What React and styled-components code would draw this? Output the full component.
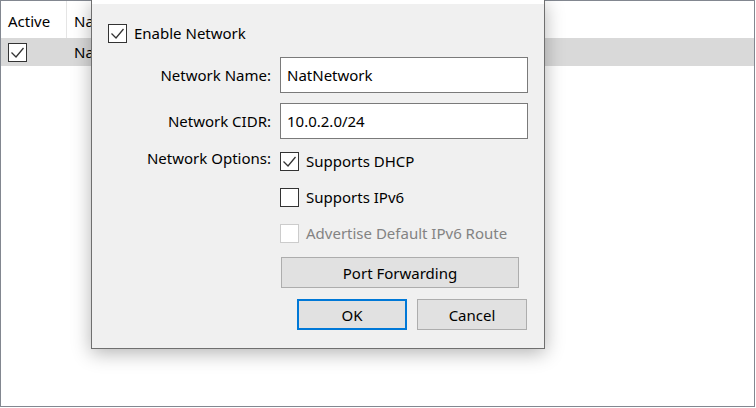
import React from "react";
import styled, { createGlobalStyle } from "styled-components";

const GlobalStyle = createGlobalStyle`
  body {
    margin: 0;
    background: #ffffff;
    font-family: "Noto Sans", "Open Sans", sans-serif;
    font-size: 15px;
    color: #000;
  }
`;

const CheckMark = () => (
  <svg width="17" height="17" viewBox="0 0 17 17">
    <polyline
      points="2.5,8.5 7,13 14.5,4"
      fill="none"
      stroke="#333"
      strokeWidth="1.3"
    />
  </svg>
);

const App = () => {
  return (
    <Screen>
      <GlobalStyle />
      <Frame>
        <HeaderRow>
          <HeaderCell $width={66}>Active</HeaderCell>
          <HeaderCell>Name</HeaderCell>
        </HeaderRow>
        <TableRow>
          <ActiveCell>
            <Box>
              <CheckMark />
            </Box>
          </ActiveCell>
          <NameCell>NatNetwork</NameCell>
        </TableRow>
      </Frame>

      <Dialog>
        <TitleStrip />
        <Content>
          <CheckLine>
            <Box>
              <CheckMark />
            </Box>
            Enable Network
          </CheckLine>

          <FormRow $top={14}>
            <Label>Network Name:</Label>
            <Input>NatNetwork</Input>
          </FormRow>

          <FormRow $top={10}>
            <Label>Network CIDR:</Label>
            <Input>10.0.2.0/24</Input>
          </FormRow>

          <FormRow $top={13} $start>
            <Label $up>Network Options:</Label>
            <CheckLine>
              <Box>
                <CheckMark />
              </Box>
              Supports DHCP
            </CheckLine>
          </FormRow>

          <FormRow $top={17}>
            <span />
            <CheckLine>
              <Box />
              Supports IPv6
            </CheckLine>
          </FormRow>

          <FormRow $top={17}>
            <span />
            <CheckLine $disabled>
              <Box $disabled />
              Advertise Default IPv6 Route
            </CheckLine>
          </FormRow>

          <FormRow $top={14}>
            <span />
            <WideButton>Port Forwarding</WideButton>
          </FormRow>

          <ButtonBar>
            <Button $default>OK</Button>
            <Button>Cancel</Button>
          </ButtonBar>
        </Content>
      </Dialog>
    </Screen>
  );
};
export default App;

const Screen = styled.div`
  position: relative;
  width: 756px;
  height: 408px;
  overflow: hidden;
`;

const Frame = styled.div`
  width: 753px;
  height: 405px;
  border: 1px solid #828790;
  background: #fff;
`;

const HeaderRow = styled.div`
  display: flex;
  height: 37px;
`;

const HeaderCell = styled.div`
  display: flex;
  align-items: center;
  padding: 3px 0 0 7px;
  box-sizing: border-box;
  width: ${(p) => (p.$width ? `${p.$width}px` : "auto")};
  border-right: ${(p) => (p.$width ? "1px solid #e5e5e5" : "none")};
`;

const TableRow = styled.div`
  display: flex;
  align-items: center;
  height: 28px;
  background: #d9d9d9;
`;

const ActiveCell = styled.div`
  width: 67px;
  padding-left: 7px;
  box-sizing: border-box;
`;

const NameCell = styled.div`
  padding-left: 6px;
`;

const Dialog = styled.div`
  position: absolute;
  left: 91px;
  top: 0;
  width: 452px;
  height: 348px;
  border: 1px solid #6f6f6f;
  border-top: none;
  background: #f0f0f0;
  box-shadow: 0 4px 18px rgba(0, 0, 0, 0.3);
  display: flex;
  flex-direction: column;
`;

const TitleStrip = styled.div`
  height: 4px;
  background: #fff;
`;

const Content = styled.div`
  display: flex;
  flex-direction: column;
  padding: 20px 16px 0 16px;
`;

const CheckLine = styled.label`
  display: flex;
  align-items: center;
  gap: 7px;
  height: 19px;
  line-height: 19px;
  white-space: nowrap;
  color: ${(p) => (p.$disabled ? "#838383" : "#000")};
`;

const Box = styled.span`
  display: flex;
  align-items: center;
  justify-content: center;
  width: 17px;
  height: 17px;
  flex: none;
  background: #fff;
  border: 1px solid ${(p) => (p.$disabled ? "#cccccc" : "#333333")};
`;

const FormRow = styled.div`
  display: grid;
  grid-template-columns: 163px 248px;
  column-gap: 9px;
  align-items: ${(p) => (p.$start ? "start" : "center")};
  margin-top: ${(p) => p.$top}px;
`;

const Label = styled.div`
  text-align: right;
  white-space: nowrap;
  line-height: 19px;
  margin-top: ${(p) => (p.$up ? "-3px" : "0")};
`;

const Input = styled.div`
  height: 36px;
  box-sizing: border-box;
  border: 1px solid #7a7a7a;
  background: #fff;
  display: flex;
  align-items: center;
  padding-left: 6px;
`;

const WideButton = styled.div`
  width: 238px;
  height: 31px;
  margin-left: 1px;
  box-sizing: border-box;
  border: 1px solid #adadad;
  background: #e1e1e1;
  display: flex;
  align-items: center;
  justify-content: center;
`;

const ButtonBar = styled.div`
  display: flex;
  justify-content: flex-end;
  gap: 10px;
  margin-top: 11px;
  padding-right: 1px;
`;

const Button = styled.div`
  width: 110px;
  height: 31px;
  box-sizing: border-box;
  border: ${(p) => (p.$default ? "2px solid #0078d7" : "1px solid #adadad")};
  background: #e1e1e1;
  display: flex;
  align-items: center;
  justify-content: center;
`;
